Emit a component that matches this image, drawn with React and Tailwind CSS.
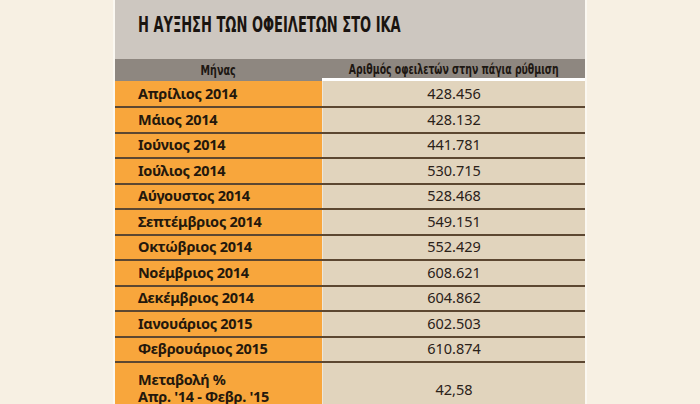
const rows = [
  ['Απρίλιος 2014', '428.456'],
  ['Μάιος 2014', '428.132'],
  ['Ιούνιος 2014', '441.781'],
  ['Ιούλιος 2014', '530.715'],
  ['Αύγουστος 2014', '528.468'],
  ['Σεπτέμβριος 2014', '549.151'],
  ['Οκτώβριος 2014', '552.429'],
  ['Νοέμβριος 2014', '608.621'],
  ['Δεκέμβριος 2014', '604.862'],
  ['Ιανουάριος 2015', '602.503'],
  ['Φεβρουάριος 2015', '610.874'],
];

const condensed = { fontFamily: '"DejaVu Sans Condensed", "DejaVu Sans", sans-serif', fontStretch: 'condensed' };
const body = { fontFamily: '"Noto Sans", "DejaVu Sans", sans-serif' };

export default function App() {
  return (
    <div className="flex h-[404px] w-full justify-center overflow-hidden bg-[#f7f0e3]">
      <div className="w-[474px] shrink-0 border-x-2 border-[#fbf8f1]">
        <div className="h-[59px] bg-[#cdc7c0] px-[23px] pt-[13px]">
          <h1
            className="inline-block origin-left scale-x-[0.69] whitespace-nowrap text-[21px] font-bold leading-[24px] text-[#1a1410]"
            style={condensed}
          >
            Η ΑΥΞΗΣΗ ΤΩΝ ΟΦΕΙΛΕΤΩΝ ΣΤΟ ΙΚΑ
          </h1>
        </div>

        <div className="grid h-[22px] grid-cols-[207px_1fr] bg-[#8e8780] text-[14px] font-bold leading-none text-[#1d1712]" style={condensed}>
          <div className="flex items-center justify-center overflow-hidden">
            <span className="inline-block scale-x-[0.76] whitespace-nowrap">Μήνας</span>
          </div>
          <div className="flex items-center justify-center overflow-hidden border-b-[3px] border-white">
            <span className="inline-block scale-x-[0.74] whitespace-nowrap">Αριθμός οφειλετών στην πάγια ρύθμιση</span>
          </div>
        </div>

        {rows.map(([month, value], i) => (
          <div
            key={month}
            className={`grid grid-cols-[207px_1fr] border-b-2 border-[#5c4731] ${i === 0 ? 'h-[27px]' : 'h-[25.5px]'}`}
          >
            <div className="flex items-center whitespace-nowrap bg-[#f8a63c] pl-[23px] text-[14.5px] font-bold tracking-[-0.3px] text-[#24180c]" style={body}>
              {month}
            </div>
            <div className="flex items-center justify-center border-l border-[#eee6d8] bg-[#e1d4bd] text-[14.5px] text-[#2a2119]" style={body}>
              {value}
            </div>
          </div>
        ))}

        <div className="grid h-[60px] grid-cols-[207px_1fr]">
          <div className="whitespace-nowrap bg-[#f8a63c] pl-[23px] pt-[8px] text-[14.5px] font-bold leading-[17px] tracking-[-0.3px] text-[#24180c]" style={body}>
            <div>Μεταβολή %</div>
            <div>Απρ. '14 - Φεβρ. '15</div>
          </div>
          <div className="flex items-start justify-center border-l border-[#eee6d8] bg-[#e1d4bd] pt-[16px] text-[14.5px] text-[#2a2119]" style={body}>
            42,58
          </div>
        </div>
      </div>
    </div>
  );
}
